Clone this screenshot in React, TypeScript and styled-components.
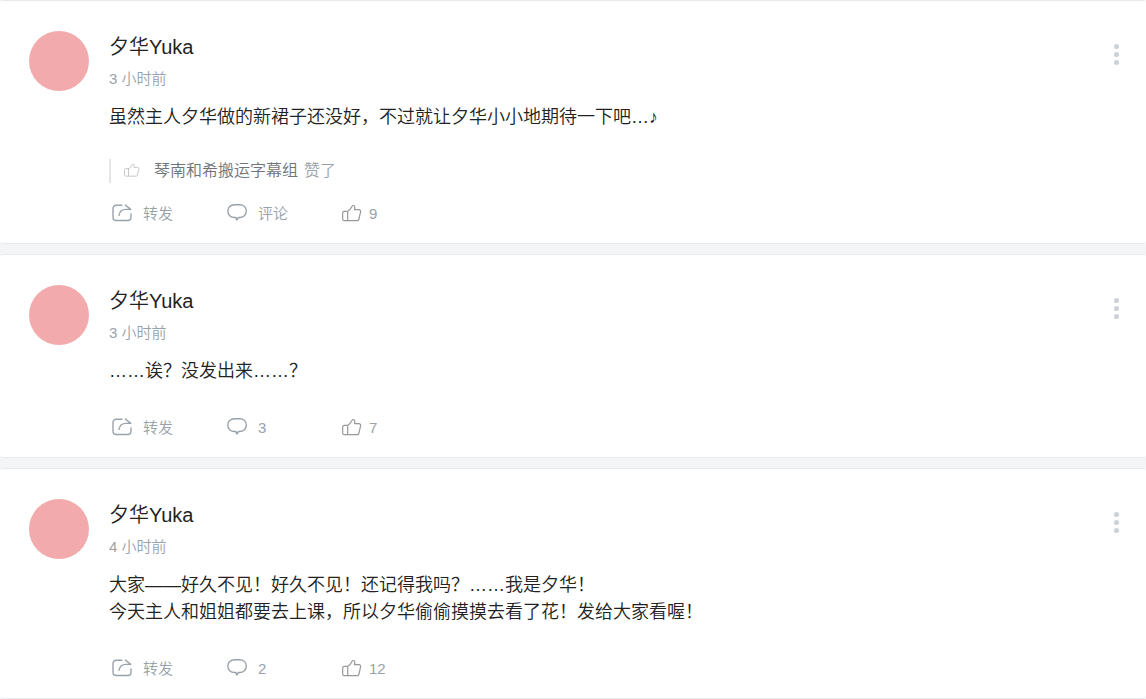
import React from "react";
import styled, { createGlobalStyle } from "styled-components";

const GlobalStyle = createGlobalStyle`
  * { box-sizing: border-box; }
  body {
    margin: 0;
    background: #f4f5f7;
    color: #222222;
    font-family: "Liberation Sans", "Noto Sans CJK SC", sans-serif;
    font-weight: 350;
  }
`;

const Feed = styled.main`
  display: flex;
  flex-direction: column;
  gap: 10px;
`;

const Card = styled.article`
  display: flex;
  align-items: flex-start;
  gap: 20px;
  padding: 30px 26px 13px 28px;
  background: #ffffff;
  border: 1px solid #e9eaec;
  border-left-color: #ffffff;
  border-right-color: #ffffff;
  border-radius: 4px;
`;

const Avatar = styled.div`
  flex: none;
  width: 60px;
  height: 60px;
  border-radius: 50%;
  background: #f2aaac;
`;

const Body = styled.div`
  flex: 1;
  min-width: 0;
`;

const Name = styled.h2`
  margin: 0;
  font-size: 20px;
  line-height: 32px;
  font-weight: inherit;
`;

const Time = styled.time`
  display: block;
  margin-top: 4px;
  font-size: 15px;
  line-height: 24px;
  color: #99a2aa;
`;

const Content = styled.p`
  margin: 13px 0 0;
  font-size: 18px;
  line-height: 27px;
`;

const LikedBy = styled.div`
  display: flex;
  align-items: center;
  margin-top: 28px;
  padding-left: 13px;
  border-left: 2px solid #e5e5e5;
  height: 24px;
  font-size: 16px;
  line-height: 24px;
  color: #99a2aa;
  svg { margin: 0 14px 2px 0; }
  strong { font-weight: inherit; color: #6d757a; margin-right: 6px; }
`;

const Actions = styled.div<{ $compact: boolean }>`
  display: flex;
  margin-top: ${(p) => (p.$compact ? 15 : 27)}px;
  padding-left: 3px;
`;

const Action = styled.button<{ $gap: number }>`
  display: flex;
  align-items: center;
  gap: ${(p) => p.$gap}px;
  width: 115px;
  height: 32px;
  padding: 0;
  border: 0;
  background: none;
  color: #99a2aa;
  font: inherit;
  font-size: 15px;
  line-height: 32px;
  text-align: left;
  cursor: pointer;
  svg { margin-bottom: 2px; }
`;

const MoreButton = styled.button`
  flex: none;
  display: flex;
  flex-direction: column;
  align-items: center;
  gap: 3px;
  margin-top: 13px;
  padding: 0;
  border: 0;
  background: none;
  cursor: pointer;
`;

const Dot = styled.span`
  width: 5px;
  height: 5px;
  border-radius: 50%;
  background: #ccd0d7;
`;

const ShareIcon = () => (
  <svg width="21" height="20" viewBox="0 0 21 20" fill="none" stroke="#99a2aa" strokeWidth="1.4" strokeLinecap="round" strokeLinejoin="round" aria-hidden="true">
    <path d="M9.800 2.200H4.200A3.200 3.200 0 0 0 1 5.400v8.900a3.200 3.200 0 0 0 3.200 3.200h11.600a3.200 3.200 0 0 0 3.200-3.200v-3.400" />
    <path d="M7 12.300c.7-4 3.300-5.900 7-5.900h4.700M13.400 2 18.700 6.400" />
  </svg>
);

const CommentIcon = () => (
  <svg width="21" height="20" viewBox="0 0 21 20" fill="none" stroke="#99a2aa" strokeWidth="1.4" strokeLinejoin="round" aria-hidden="true">
    <path d="M7.500 1.800h5c4 0 6.800 2.600 6.800 6.300 0 3.600-2.800 6.400-6.800 6.400h-1L9.700 17l-.7-2.500H7.500C3.500 14.500.8 11.700.8 8.100c0-3.700 2.700-6.300 6.700-6.300Z" />
  </svg>
);

const ThumbIcon = ({ size, color }: { size: number; color: string }) => (
  <svg width={size} height={size} viewBox="0 0 20 20" fill="none" stroke={color} strokeWidth="1.2" strokeLinejoin="round" strokeLinecap="round" aria-hidden="true">
    <path d="M5.700 8.300H2.200A1.500 1.500 0 0 0 .7 9.800v6.400a1.500 1.500 0 0 0 1.500 1.500h13c.8 0 1.400-.4 1.600-1.200L18.600 8.900c.3-1.300-.4-2.200-1.700-2.200h-4.400c.4-1.400.4-2.500.1-3.300-.5-1.200-2-1.200-2.500-.1C9 5.600 8 7.200 5.700 8.300Zm0 0v9.400" />
  </svg>
);

type Post = {
  time: string;
  lines: string[];
  likedBy?: string;
  comments: string;
  likes: string;
};

const posts: Post[] = [
  {
    time: "3 小时前",
    lines: ["虽然主人夕华做的新裙子还没好，不过就让夕华小小地期待一下吧…♪"],
    likedBy: "琴南和希搬运字幕组",
    comments: "评论",
    likes: "9",
  },
  { time: "3 小时前", lines: ["……诶？没发出来……？"], comments: "3", likes: "7" },
  {
    time: "4 小时前",
    lines: [
      "大家——好久不见！好久不见！还记得我吗？……我是夕华！",
      "今天主人和姐姐都要去上课，所以夕华偷偷摸摸去看了花！发给大家看喔！",
    ],
    comments: "2",
    likes: "12",
  },
];

const PostCard = ({ post }: { post: Post }) => (
  <Card>
    <Avatar />
    <Body>
      <Name>夕华Yuka</Name>
      <Time>{post.time}</Time>
      <Content>
        {post.lines.map((line, i) => (
          <React.Fragment key={line}>
            {i > 0 && <br />}
            {line}
          </React.Fragment>
        ))}
      </Content>
      {post.likedBy && (
        <LikedBy>
          <ThumbIcon size={16} color="#c4c4c4" />
          <strong>{post.likedBy}</strong>
          <span>赞了</span>
        </LikedBy>
      )}
      <Actions $compact={Boolean(post.likedBy)}>
        <Action $gap={10}>
          <ShareIcon />
          <span>转发</span>
        </Action>
        <Action $gap={10}>
          <CommentIcon />
          <span>{post.comments}</span>
        </Action>
        <Action $gap={7}>
          <ThumbIcon size={20} color="#999999" />
          <span>{post.likes}</span>
        </Action>
      </Actions>
    </Body>
    <MoreButton aria-label="更多">
      <Dot />
      <Dot />
      <Dot />
    </MoreButton>
  </Card>
);

export default function App() {
  return (
    <>
      <GlobalStyle />
      <Feed>
        {posts.map((post, i) => (
          <PostCard key={i} post={post} />
        ))}
      </Feed>
    </>
  );
}
